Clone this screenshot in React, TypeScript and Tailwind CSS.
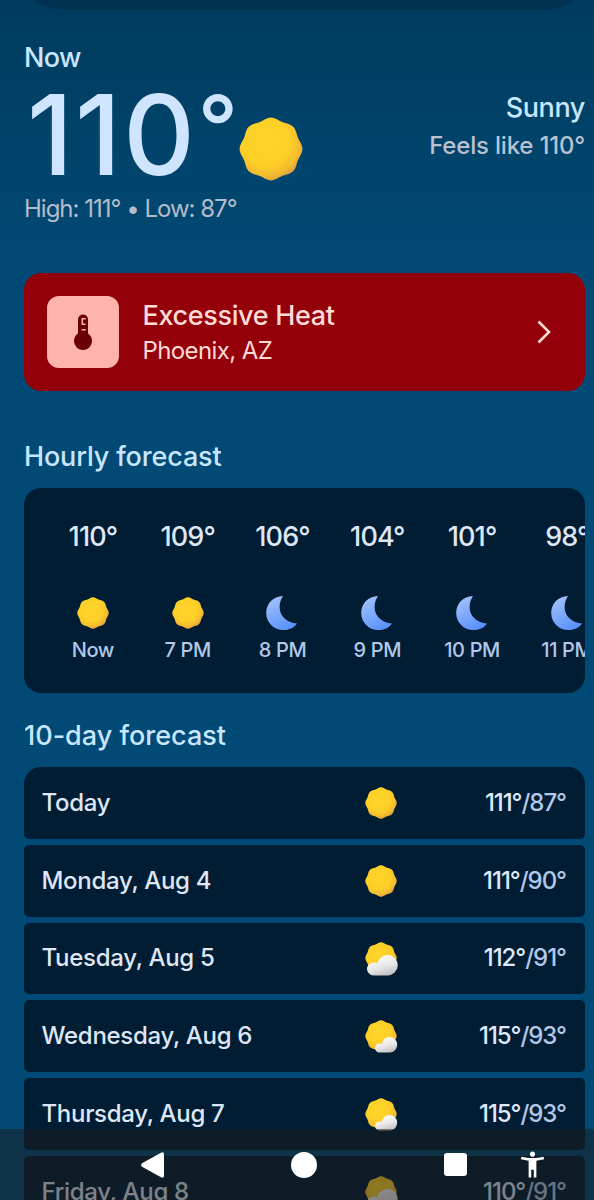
import { clsx } from "clsx";

type Condition = "sunny" | "clear-night" | "mostly-sunny" | "partly-cloudy";

interface Hour {
  temp: string;
  label: string;
  condition: Condition;
}

interface Day {
  name: string;
  high: string;
  low: string;
  condition: Condition;
}

const hours: Hour[] = [
  { temp: "110°", label: "Now", condition: "sunny" },
  { temp: "109°", label: "7 PM", condition: "sunny" },
  { temp: "106°", label: "8 PM", condition: "clear-night" },
  { temp: "104°", label: "9 PM", condition: "clear-night" },
  { temp: "101°", label: "10 PM", condition: "clear-night" },
  { temp: "98°", label: "11 PM", condition: "clear-night" },
];

const days: Day[] = [
  { name: "Today", high: "111°", low: "87°", condition: "sunny" },
  { name: "Monday, Aug 4", high: "111°", low: "90°", condition: "sunny" },
  { name: "Tuesday, Aug 5", high: "112°", low: "91°", condition: "partly-cloudy" },
  { name: "Wednesday, Aug 6", high: "115°", low: "93°", condition: "mostly-sunny" },
  { name: "Thursday, Aug 7", high: "115°", low: "93°", condition: "mostly-sunny" },
  { name: "Friday, Aug 8", high: "110°", low: "91°", condition: "partly-cloudy" },
];

// Circle with eight soft lobes, centred on 0,0
const sunPath = (() => {
  const points: string[] = [];
  for (let i = 0; i < 144; i++) {
    const a = (i / 144) * Math.PI * 2;
    const r = 30.3 + 1.1 * Math.cos(8 * a);
    points.push(`${(r * Math.cos(a)).toFixed(2)},${(r * Math.sin(a)).toFixed(2)}`);
  }
  return `M${points.join("L")}Z`;
})();

// Gradients shared by all the weather icons
function IconDefs() {
  return (
    <svg width="0" height="0" className="absolute" aria-hidden="true">
      <defs>
        <radialGradient id="sun" cx="0.42" cy="0.38" r="0.64">
          <stop offset="0" stopColor="#ffd52b" />
          <stop offset="0.6" stopColor="#fdcf27" />
          <stop offset="0.85" stopColor="#f3bb30" />
          <stop offset="1" stopColor="#dc9d42" />
        </radialGradient>
        <linearGradient id="moon" x1="0.2" y1="0" x2="0.7" y2="1">
          <stop offset="0" stopColor="#a3c2fb" />
          <stop offset="1" stopColor="#5790fb" />
        </linearGradient>
        <linearGradient id="cloud" x1="0.35" y1="0.1" x2="0.75" y2="1">
          <stop offset="0" stopColor="#fafafa" />
          <stop offset="0.5" stopColor="#e8e8e9" />
          <stop offset="1" stopColor="#bdbdc0" />
        </linearGradient>
      </defs>
    </svg>
  );
}

function WeatherIcon({ condition, className }: { condition: Condition; className?: string }) {
  if (condition === "clear-night") {
    return (
      <svg viewBox="0 0 34 34" className={className}>
        <path
          d="M18 0C8.200 .2 1.200 7.600 1.200 17C1.200 26.600 8.800 34 18.200 34C24.200 34 29.200 31.600 32 27.400C22.400 27 14.600 20.400 14.600 11C14.600 6.800 16 3 18 0Z"
          fill="url(#moon)"
        />
      </svg>
    );
  }
  return (
    <svg viewBox="-32 -32 64 64" className={clsx("overflow-visible", className)}>
      <path d={sunPath} fill="url(#sun)" />
      {condition === "partly-cloudy" && (
        <path d="M-15 35a13 13 0 0 1 0-26q4-.2 8 1.500a20.500 20.500 0 1 1 20.500 24.500z" fill="url(#cloud)" />
      )}
      {condition === "mostly-sunny" && (
        <path d="M-3 33a9 9 0 0 1 0-18q2.500 0 4.500 1a15.500 15.500 0 1 1 17 17z" fill="url(#cloud)" />
      )}
    </svg>
  );
}

function CurrentConditions() {
  return (
    <section className="mt-[30px]">
      <h2 className="text-[27px] leading-9 tracking-[-0.7px] text-[#c8e6ff]">Now</h2>
      <div className="flex h-[119px] justify-between">
        <div className="flex">
          <span className="w-[215px] whitespace-nowrap pl-[3px] text-[111px] font-medium leading-[118px] tracking-[2px] text-[#cfe4ff]">
            110<span className="ml-px align-[17px] text-[88px] leading-none">°</span>
          </span>
          <WeatherIcon condition="sunny" className="mt-[41px] size-16" />
        </div>
        <div className="pt-[14px] text-right">
          <p className="text-[27px] leading-9 tracking-[-0.4px] text-[#c8e6ff]">Sunny</p>
          <p className="mt-[2px] text-2xl leading-9 tracking-[-0.2px] text-[#b9c0d0]">Feels like 110°</p>
        </div>
      </div>
      <p className="pt-px text-2xl leading-[26px] tracking-[-1px] text-[#b4bccc] font-normal">High: 111° • Low: 87°</p>
    </section>
  );
}

function HeatAlert() {
  return (
    <section className="mt-[51px] flex h-[118px] items-center rounded-[17px] bg-[#930009] pl-[23px] pr-[34px] text-[#ffdad6]">
      <div className="flex size-[72px] items-center justify-center rounded-xl bg-[#ffb4ab]">
        <svg viewBox="0 0 18 36" className="h-9 w-[18px]">
          <path d="M4 5.500a5 5 0 0 1 10 0V19.500a9 9 0 1 1-10 0z" fill="#690005" />
          <path d="M7.500 4.700h4.200M8.500 10.200h3M7.500 15.800h4.200M8.300 4v7" stroke="#ffb4ab" strokeWidth="1.500" fill="none" />
        </svg>
      </div>
      <div className="ml-[23.5px] flex-1 pt-[2px]">
        <h3 className="text-[27px] leading-9 tracking-[-0.35px]">Excessive Heat</h3>
        <p className="text-2xl leading-[34px] font-normal tracking-[-0.6px]">Phoenix, AZ</p>
      </div>
      <svg viewBox="0 0 14 24" className="h-6 w-3.5">
        <path d="M1.500 1.500L12 12L1.500 22.500" stroke="currentColor" strokeWidth="2.600" fill="none" />
      </svg>
    </section>
  );
}

function HourlyForecast() {
  return (
    <section className="mt-12">
      <h2 className="text-[27px] leading-9 tracking-[-0.15px] text-[#c8e6ff]">Hourly forecast</h2>
      <div className="mt-[13px] flex h-[205px] overflow-hidden rounded-[17px] bg-[#001d34] pl-[21.5px] pt-[31px]">
        {hours.map((hour) => (
          <div key={hour.label} className="flex w-[94.8px] shrink-0 flex-col items-center">
            <span className="text-[27px] leading-9 tracking-[-0.9px] text-[#dfe6f5]">{hour.temp}</span>
            <WeatherIcon
              condition={hour.condition}
              className={clsx(hour.condition === "sunny" ? "mb-px mt-[42px] size-8" : "mt-[41px] size-[34px]")}
            />
            <span className="mt-2 text-xl leading-[25px] tracking-[-0.35px] text-[#b3c8e8]">{hour.label}</span>
          </div>
        ))}
      </div>
    </section>
  );
}

function DailyForecast() {
  return (
    <section className="mt-[25px]">
      <h2 className="text-[27px] leading-9 text-[#c8e6ff]">10-day forecast</h2>
      <div className="mt-[13px] flex flex-col gap-1.5">
        {days.map((day) => (
          <div
            key={day.name}
            className="flex h-[71.8px] items-center rounded-[5px] bg-[#001d34] pl-[17.5px] pr-[19px] text-2xl first:rounded-t-[17px]"
          >
            <span className="w-[323.5px] tracking-[-0.3px] text-[#dfe6f5]">{day.name}</span>
            <WeatherIcon condition={day.condition} className="size-8" />
            <span className="flex-1 text-right tracking-[-1.05px] text-[#b3c8e8]">
              <span className="text-[#dfe8fa]">{day.high}</span>/{day.low}
            </span>
          </div>
        ))}
      </div>
    </section>
  );
}

function SystemNavBar() {
  return (
    <nav className="absolute inset-x-0 bottom-0 flex h-[71px] items-center bg-[#1b1b1b]/50 text-white">
      <svg viewBox="0 0 24 26" className="ml-[140px] h-[26px] w-6" fill="currentColor">
        <path d="M21 .7Q24 -.6 24 2.500V23.500Q24 26.600 21 25.300L2 14.800Q.2 13 2 11.200Z" />
      </svg>
      <div className="ml-[127px] size-[26px] rounded-full bg-white" />
      <div className="ml-[127px] size-[23px] rounded-[3px] bg-white" />
      <svg viewBox="0 0 24 24" className="ml-[50px] size-[31px]" fill="currentColor">
        <path d="M20.5 6c-2.61.7-5.67 1-8.5 1s-5.89-.3-8.5-1L3 8c1.86.5 4 .83 6 1v13h2v-6h2v6h2V9c2-.17 4.140-.5 6-1l-.5-2zM12 6c1.100 0 2-.9 2-2s-.9-2-2-2-2 .9-2 2 .9 2 2 2z" />
      </svg>
    </nav>
  );
}

export default function App() {
  return (
    <div className="relative h-[1200px] w-[594px] overflow-hidden bg-[#004a75] bg-linear-to-b from-[#003b5e] to-[#004a75] to-[270px] font-['Inter','Roboto',sans-serif] font-[450]">
      <IconDefs />
      {/* Bottom edge of the search bar, scrolled almost out of view */}
      <div className="flex h-[10px] items-end overflow-hidden pl-6 pr-[9px]">
        <div className="h-[76px] w-full shrink-0 rounded-full bg-[#003252]" />
      </div>
      <main className="pl-6 pr-[9px]">
        <CurrentConditions />
        <HeatAlert />
        <HourlyForecast />
        <DailyForecast />
      </main>
      <SystemNavBar />
    </div>
  );
}
